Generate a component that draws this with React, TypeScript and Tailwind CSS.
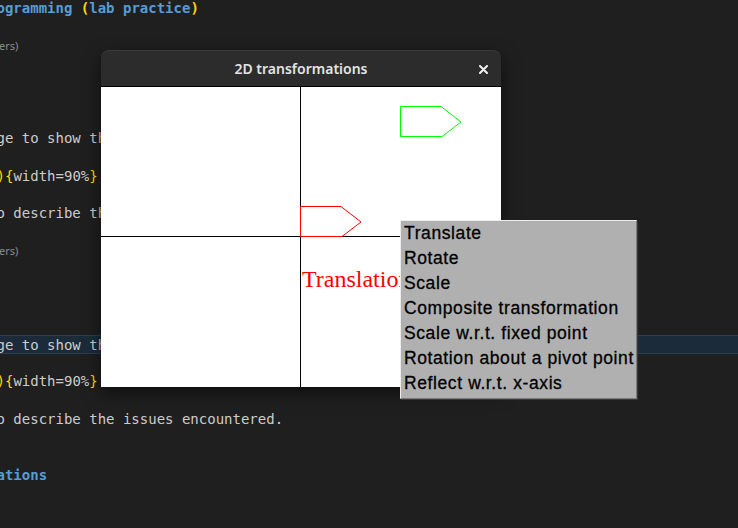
import React from 'react';

type Seg = { t: string; c?: 'blue' | 'yellow' | 'text' };
type Line = { segs?: Seg[]; hint?: string; bold?: boolean; active?: boolean };

const lines: Line[] = [
  { bold: true, segs: [{ t: 'ogramming ', c: 'blue' }, { t: '(', c: 'yellow' }, { t: 'lab practice', c: 'blue' }, { t: ')', c: 'yellow' }] },
  {},
  { hint: 'ers)' },
  {}, {}, {}, {},
  { segs: [{ t: 'ge to show the output of the program.' }] },
  {},
  { segs: [{ t: ')', c: 'yellow' }, { t: '{', c: 'yellow' }, { t: 'width=90%' }, { t: '}', c: 'yellow' }] },
  {},
  { segs: [{ t: 'o describe the issues encountered.' }] },
  {},
  { hint: 'ers)' },
  {}, {}, {}, {},
  { active: true, segs: [{ t: 'ge to show the output of the program.' }] },
  {},
  { segs: [{ t: ')', c: 'yellow' }, { t: '{', c: 'yellow' }, { t: 'width=90%' }, { t: '}', c: 'yellow' }] },
  {},
  { segs: [{ t: 'o describe the issues encountered.' }] },
  {}, {},
  { bold: true, segs: [{ t: 'ations', c: 'blue' }] },
];

const menuItems = [
  'Translate',
  'Rotate',
  'Scale',
  'Composite transformation',
  'Scale w.r.t. fixed point',
  'Rotation about a pivot point',
  'Reflect w.r.t. x-axis',
];

function segClass(c?: Seg['c']) {
  if (c === 'blue') return 'text-[#569cd6]';
  if (c === 'yellow') return 'text-[#ffd700]';
  return 'text-[#cccccc]';
}

function EditorLine({ line }: { line: Line }) {
  return (
    <div
      className={`h-[18.7px] leading-[18.7px] whitespace-pre ${
        line.active ? 'bg-[#1c2b3a] border-y border-[#2b3f52]' : ''
      } ${line.bold ? 'font-bold' : ''}`}
    >
      {line.hint ? (
        <span className="ml-[2.5px] font-['Noto_Sans',sans-serif] text-[11px] text-[#8b8b8b]">{line.hint}</span>
      ) : (
        line.segs?.map((s, i) => (
          <span key={i} className={segClass(s.c)}>
            {s.t}
          </span>
        ))
      )}
    </div>
  );
}

function TransformWindow() {
  return (
    <div className="absolute left-[101px] top-[50px] w-[400px] flex flex-col rounded-t-[8px] shadow-[0_6px_18px_rgba(0,0,0,0.55)]">
      <div className="relative h-[37px] flex items-center justify-center rounded-t-[8px] bg-[#2c2c2c] border-t border-[#3a3a3a] border-b border-b-black">
        <span className="font-['Noto_Sans',sans-serif] font-semibold text-[14px] text-[#e3e3e3]">2D transformations</span>
        <svg className="absolute right-[13px] top-[14px]" width="9" height="9" viewBox="0 0 9 9">
          <path d="M1 1L8 8M8 1L1 8" stroke="#f2f2f2" strokeWidth="2" strokeLinecap="round" />
        </svg>
      </div>
      <svg width="400" height="300" viewBox="0 0 400 300" className="block bg-white">
        <line x1="199.5" y1="0" x2="199.5" y2="300" stroke="#000" strokeWidth="1" />
        <line x1="0" y1="149.5" x2="400" y2="149.5" stroke="#000" strokeWidth="1" />
        <polygon
          points="199.5,119.5 240,119.5 260,135 241,149.5 199.5,149.5"
          fill="none"
          stroke="#ff0000"
          strokeWidth="1"
        />
        <polygon
          points="299.5,19.5 340,19.5 360,35 341,49.5 299.5,49.5"
          fill="none"
          stroke="#00ff00"
          strokeWidth="1"
        />
        <text x="201" y="199.5" fill="#ff0000" fontSize="24" fontFamily="'Liberation Serif', serif">
          Translation
        </text>
      </svg>
    </div>
  );
}

function PopupMenu() {
  return (
    <div className="absolute left-[400px] top-[220px] w-[237px] bg-[#b0b0b0] border border-t-[#ececec] border-l-[#ececec] border-r-[#7a7a7a] border-b-[#7a7a7a] pb-[2px] shadow-[1px_1px_0_#3a3a3a]">
      {menuItems.map((item) => (
        <div
          key={item}
          className="h-[25px] leading-[25px] pl-[3px] whitespace-nowrap font-['Liberation_Sans',Arial,sans-serif] text-[17.5px] tracking-[0.6px] text-black [-webkit-text-stroke:0.3px_#000]"
        >
          {item}
        </div>
      ))}
    </div>
  );
}

export default function App() {
  return (
    <div className="relative w-[738px] h-[528px] overflow-hidden bg-[#1f1f1f]">
      <div className="-ml-[3.5px] -mt-[1.5px] w-[760px] font-['DejaVu_Sans_Mono',monospace] text-[14px]">
        {lines.map((line, i) => (
          <EditorLine key={i} line={line} />
        ))}
      </div>
      <TransformWindow />
      <PopupMenu />
    </div>
  );
}
